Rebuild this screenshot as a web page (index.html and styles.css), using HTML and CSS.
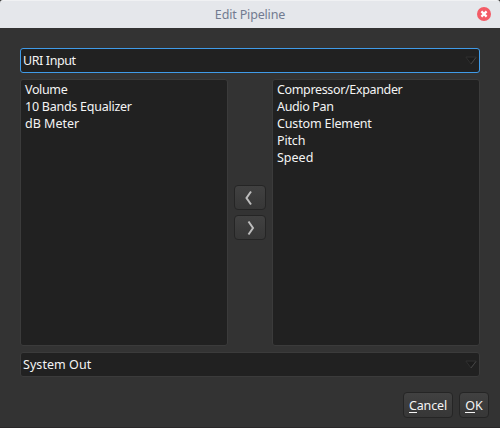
FILE: index.html
```html
<!DOCTYPE html>
<html lang="en">
<head>
<meta charset="utf-8">
<title>Edit Pipeline</title>
<link rel="stylesheet" href="styles.css">
</head>
<body>
<div class="window">
  <header class="titlebar">
    <span class="title">Edit Pipeline</span>
    <svg class="close" width="14" height="14" viewBox="0 0 14 14"><circle cx="7" cy="7" r="7" fill="#f35b66"/><path d="M4.4 4.4l5.2 5.2M9.6 4.4l-5.2 5.2" stroke="#fff" stroke-width="2.2"/></svg>
  </header>
  <main class="content">
    <div class="combo focused"><span class="uri">URI Input</span><svg width="12" height="9" viewBox="0 0 12 9"><path d="M.8 1h10.4L6 8z" fill="#1c1c1c" stroke="#303030"/><path d="M6 8L11 1.5" stroke="#444"/></svg></div>
    <div class="lists">
      <ul class="list">
        <li class="tight">Volume</li>
        <li class="snug">10 Bands Equalizer</li>
        <li>dB Meter</li>
      </ul>
      <div class="arrows">
        <button class="button arrow"><svg width="10" height="16" viewBox="0 0 10 16"><path d="M6 1.5L1.5 8L6 14.5" fill="none" stroke="#bdbdbd" stroke-width="2"/></svg></button>
        <button class="button arrow"><svg width="10" height="16" viewBox="0 0 10 16"><path d="M3.5 1.5L8 8L3.5 14.5" fill="none" stroke="#bdbdbd" stroke-width="2"/></svg></button>
      </div>
      <ul class="list">
        <li class="tight">Compressor/Expander</li>
        <li class="tight">Audio Pan</li>
        <li class="even">Custom Element</li>
        <li class="even">Pitch</li>
        <li>Speed</li>
      </ul>
    </div>
    <div class="combo"><span class="wide">System Out</span><svg width="12" height="9" viewBox="0 0 12 9"><path d="M.8 1h10.4L6 8z" fill="#1c1c1c" stroke="#303030"/><path d="M6 8L11 1.5" stroke="#444"/></svg></div>
  </main>
  <footer class="actions">
    <button class="button cancel"><span><span class="key">C</span>ancel</span></button>
    <button class="button ok"><span><span class="key">O</span>K</span></button>
  </footer>
</div>
</body>
</html>
```
FILE: styles.css
```css
* { box-sizing: border-box; }
body {
  margin: 0;
  background: #333;
  color: #f4f4f4;
  font: 12.5px/17px "Noto Sans", sans-serif;
}
.window {
  width: 500px;
  height: 428px;
  overflow: hidden;
  background: #333;
  border-bottom: 1px solid #2a2829;
}
.titlebar {
  display: grid;
  grid-template-columns: 1fr auto 1fr;
  align-items: center;
  height: 28px;
  padding: 0 9px 1px;
  background: #e5e7eb;
  border-top: 1px solid #f0f1f3;
  border-radius: 3px 3px 0 0;
  color: #727b90;
}
.title { grid-column: 2; letter-spacing: -0.16px; }
.close { justify-self: end; }
.content { padding: 20px 20px 0; }
.combo {
  display: flex;
  align-items: center;
  justify-content: space-between;
  height: 25px;
  padding: 0 2px;
  background: #212121;
  border: 1px solid #3b3b3b;
  border-radius: 3px;
}
.combo.focused { border-color: #409be8; }
.lists {
  display: grid;
  grid-template-columns: 208px 32px 208px;
  justify-content: space-between;
  height: 267px;
  margin: 6px 0;
}
.list {
  margin: 0;
  padding: 1px 4px;
  list-style: none;
  background: #212121;
  border: 1px solid #3b3b3b;
  border-radius: 3px;
}
.list li { height: 17px; white-space: nowrap; }
.tight { letter-spacing: -0.35px; }
.snug { letter-spacing: -0.25px; }
.even { letter-spacing: -0.15px; }
.uri { letter-spacing: -0.4px; }
.wide { letter-spacing: 0.05px; }
.arrows {
  display: flex;
  flex-direction: column;
  justify-content: center;
  gap: 5px;
}
.button {
  display: flex;
  align-items: center;
  justify-content: center;
  height: 26px;
  padding: 0;
  color: #f4f4f4;
  font: inherit;
  background: linear-gradient(#414141, #373737);
  border: 1px solid #252525;
  border-radius: 4px;
}
.arrow { height: 25px; }
.actions {
  display: flex;
  justify-content: flex-end;
  gap: 6px;
  padding: 15px 11px 0 0;
}
.cancel { width: 50px; letter-spacing: -0.15px; }
.ok { width: 30px; }
.key { display: inline-block; height: 16px; border-bottom: 1px solid #f4f4f4; line-height: 17px; }
```
